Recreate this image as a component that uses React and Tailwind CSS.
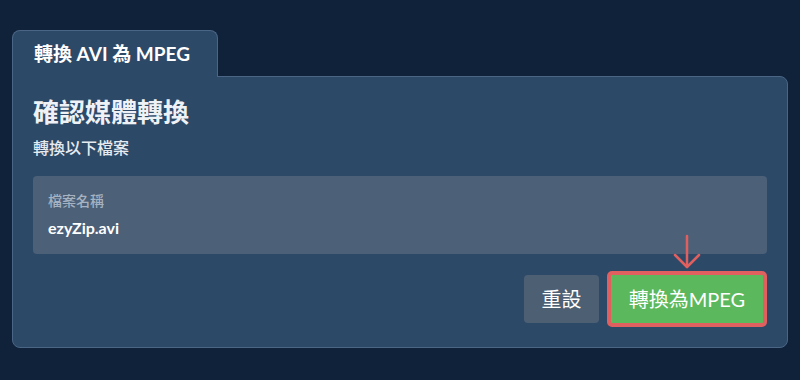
export default function App() {
  return (
    <div
      className="w-[800px] h-[380px] bg-[#10223a] pt-[30px] px-[12px]"
      style={{ fontFamily: 'Lato, "Noto Sans CJK TC", sans-serif' }}
    >
      <div className="flex flex-col w-[776px]">
        {/* tab */}
        <div className="relative z-10 -mb-px w-[206px] h-[47px] flex items-center pl-[21px] bg-[#2d4968] border border-b-0 border-[#4a6585] rounded-t-[8px]">
          <span className="text-[19px] font-bold text-white">轉換 AVI 為 MPEG</span>
        </div>

        {/* panel */}
        <div className="bg-[#2d4968] border border-[#4a6585] rounded-b-[8px] rounded-tr-[8px] px-[20px] pt-[19px] pb-[20px]">
          <h1 className="text-[26px] font-bold text-[#eef2f6] leading-[32px]">確認媒體轉換</h1>
          <p className="text-[16px] font-medium text-[#e6ebf0] mt-[10px] leading-[20px]">轉換以下檔案</p>

          <div className="mt-[18px] h-[78px] bg-[#4c6078] rounded-[4px] px-[15px] pt-[15px]">
            <div className="text-[14px] font-medium text-[#a5b2c1] leading-[20px]">檔案名稱</div>
            <div className="text-[16px] font-bold text-white leading-[22px] mt-[6px]">ezyZip.avi</div>
          </div>

          <div className="flex justify-end items-center gap-[8px] mt-[17px]">
            <button className="w-[75px] h-[48px] bg-[#4d5f73] rounded-[4px] text-[20px] text-white">重設</button>
            <div className="relative">
              <svg className="absolute left-[66px] -top-[37px]" width="28" height="36" viewBox="0 0 28 36" fill="none" stroke="#e05f5f" strokeWidth="2.5" strokeLinecap="round">
                <line x1="14" y1="2" x2="14" y2="33" />
                <polyline points="2,21 14,33 26,21" strokeLinejoin="round" />
              </svg>
              <button className="w-[160px] h-[56px] bg-[#5cb85c] border-[4px] border-[#e05f5f] rounded-[5px] text-[20px] text-white">轉換為MPEG</button>
            </div>
          </div>
        </div>
      </div>
    </div>
  );
}
